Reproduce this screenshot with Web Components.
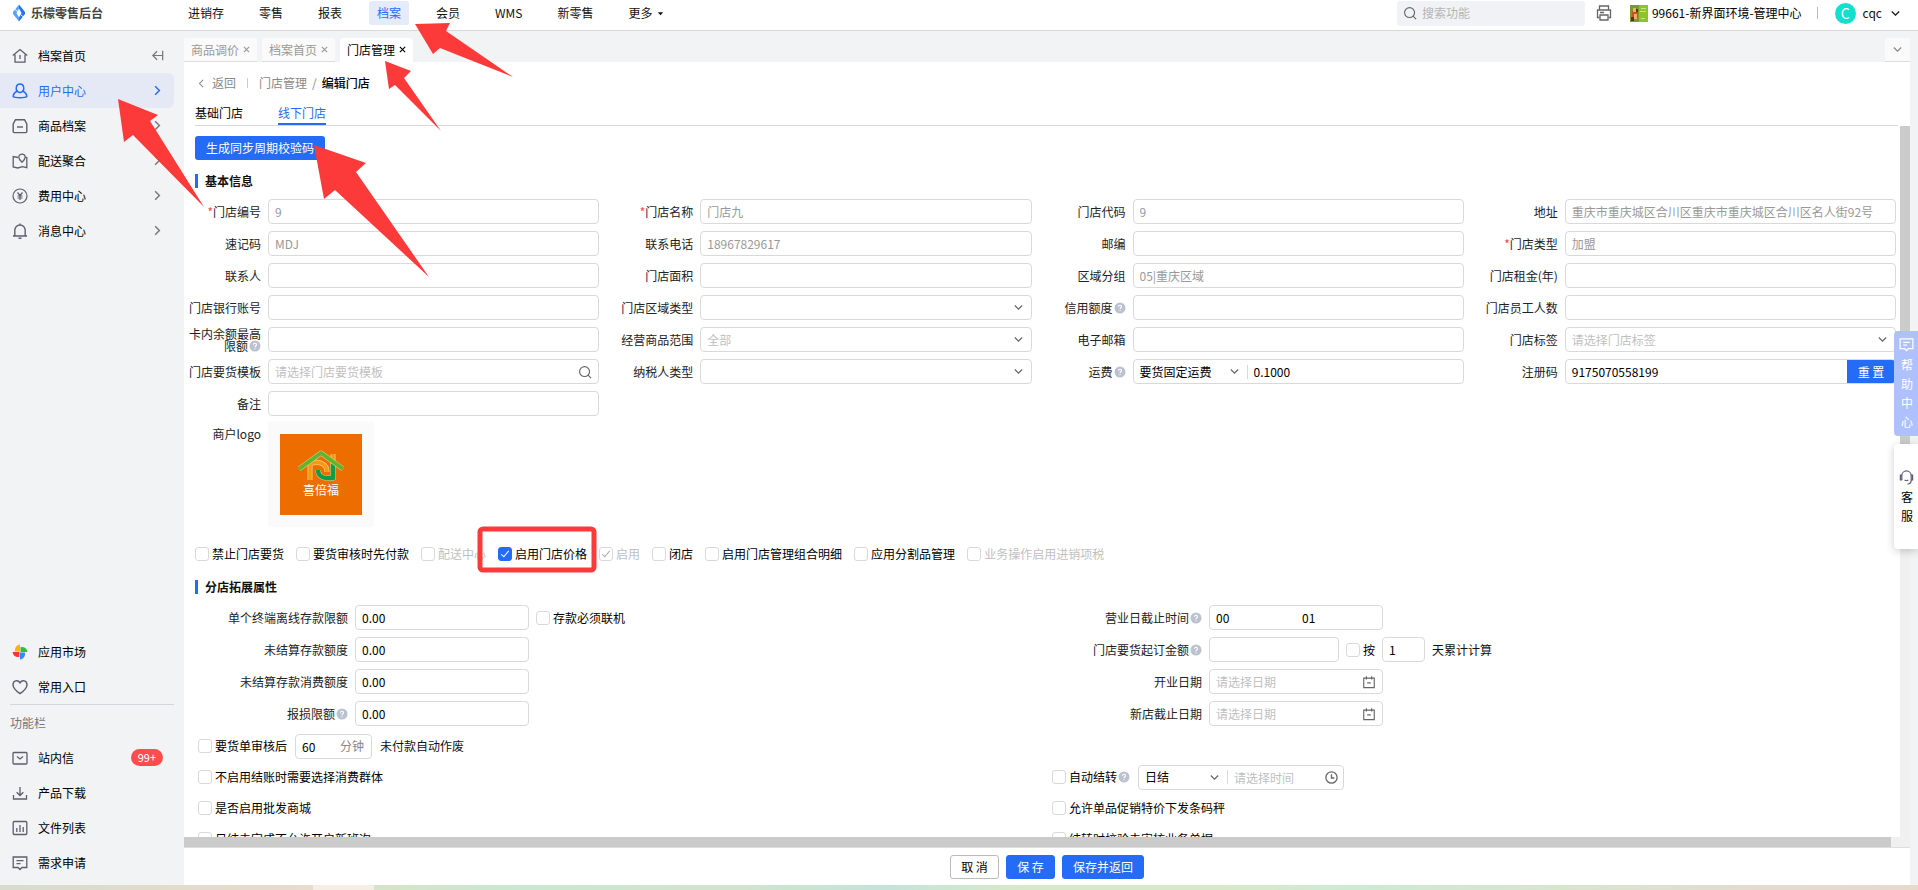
<!DOCTYPE html>
<html lang="zh-CN">
<head>
<meta charset="utf-8">
<title>乐檬零售后台</title>
<style>
  html, body { margin: 0; height: 100%; }
  body {
    font: 12px/16px "Noto Sans CJK SC", "Noto Sans", sans-serif;
    color: #111; background: #f1f3f5; overflow: hidden;
    --blue: #246bf5; --line: #d9d9d9; --muted: #999; --hint: #bfbfbf; --panel: #f1f3f5;
  }
</style>
</head>
<body>
<admin-shell></admin-shell>
<script>
const ICONS = {
  brand: ['0 0 14 18', '<path fill="#5aa4ff" d="M7 .5 1 8v2l6 7.500z"/><path fill="#2a72f0" d="M7 .5 13 8v2l-6 7.500z"/><path fill="#fff" d="M7 4.500 9.500 9 7 13.500 4.500 9z"/><path stroke="#fff" stroke-width=".9" d="m2.500 5 3 2.500M11.500 13l-3-2.500"/>'],
  home: ['0 0 16 16', '<g fill="none" stroke="currentColor" stroke-width="1.300"><path d="M.8 7.500 8 1.500l7.200 6"/><path d="M3 6.500V14.200h10V6.500M8 7v4"/></g>'],
  user: ['0 0 16 16', '<g fill="none" stroke="currentColor" stroke-width="1.500"><path d="M5.300 8.200C3.400 6.200 3.800 1 8 1s4.600 5.200 2.700 7.200"/><path d="M5.300 8.200C2.500 9.400 1.200 11.500 1.200 13.500c2 1.700 11.600 1.700 13.600 0 0-2-1.300-4.100-4.100-5.300-1.500 1.400-3.900 1.400-5.400 0z"/></g>'],
  goods: ['0 0 16 16', '<g fill="none" stroke="currentColor" stroke-width="1.400"><path d="M3.500 1.700h9L14.800 6v7.600a1 1 0 0 1-1 1H2.200a1 1 0 0 1-1-1V6z"/><path d="M5 9h6"/></g>'],
  map: ['0 0 16 16', '<g fill="none" stroke="currentColor" stroke-width="1.300"><path d="M6 4.500 1.200 3.500V14l4.600 1 4.700-1.300 4.300.9V4.500l-1.600-.3"/><path d="M10 9.200C7.500 7 6.800 5.800 6.800 4.300a3.200 3.200 0 0 1 6.400 0c0 1.500-.7 2.700-3.200 4.900z"/></g>'],
  yen: ['0 0 16 16', '<g fill="none" stroke="currentColor" stroke-width="1.200"><circle cx="8" cy="8" r="7"/><path d="m5.500 4.500 2.500 3 2.500-3M8 7.500V12M5.500 8h5M5.500 10h5"/></g>'],
  bell: ['0 0 16 16', '<g fill="none" stroke="currentColor" stroke-width="1.400"><path d="M2.800 13V7.200a5.200 5.200 0 0 1 10.400 0V13M1 13h14M8 2V.5M6.500 15.200h3"/></g>'],
  pinwheel: ['0 0 16 16', '<path fill="#ffb020" d="M8 7.500H3C2.500 3.500 4.500 1 8 .5z"/><path fill="#25c53a" d="M8.500 8V3c4-.5 6.500 1.500 7 5z"/><path fill="#2f8cff" d="M8 8.500h5c.5 4-1.500 6.500-5 7z"/><path fill="#f8352f" d="M7.500 8v5c-4 .5-6.500-1.500-7-5z"/>'],
  heart: ['0 0 16 16', '<path fill="none" stroke="currentColor" stroke-width="1.400" d="M8 14.700C4.500 12.300 1 9.500 1 5.800 1 1.500 6 .3 8 3.800c2-3.500 7-2.300 7 2 0 3.700-3.500 6.500-7 8.900z"/>'],
  mail: ['0 0 16 16', '<g fill="none" stroke="currentColor" stroke-width="1.300"><rect x="1" y="2.500" width="14" height="11.500" rx="1"/><path d="m5 6.500 3 2.500 3-2.500"/></g>'],
  download: ['0 0 16 16', '<path fill="none" stroke="currentColor" stroke-width="1.300" d="M8 2v8M4.700 7.200 8 10.500l3.300-3.300M1.500 10v4h13v-4"/>'],
  chart: ['0 0 16 16', '<g fill="none" stroke="currentColor" stroke-width="1.300"><rect x="1.200" y="1.500" width="13.600" height="13" rx="1"/><path d="M4.800 12V8M8 12V5M11.200 12V7"/></g>'],
  note: ['0 0 16 16', '<path fill="none" stroke="currentColor" stroke-width="1.300" d="M1.200 2h13.600v10.500H10l-2 2-2-2H1.200zM4.500 5.700h7M4.500 8.700h4"/>'],
  right: ['0 0 16 16', '<path fill="none" stroke="currentColor" stroke-width="1.600" d="m5.500 3.500 4.500 4.500-4.500 4.500"/>'],
  left: ['0 0 16 16', '<path fill="none" stroke="currentColor" stroke-width="1.300" d="M10 3.500 5.500 8l4.500 4.500"/>'],
  down: ['0 0 16 16', '<path fill="none" stroke="currentColor" stroke-width="1.500" d="M3.500 5.500 8 10l4.500-4.500"/>'],
  fold: ['0 0 16 16', '<path fill="none" stroke="currentColor" stroke-width="1.300" d="M13.500 3v10M13 8H3M7.500 3.500 3 8l4.500 4.500"/>'],
  search: ['0 0 16 16', '<g fill="none" stroke="currentColor" stroke-width="1.300"><circle cx="7.500" cy="7.500" r="5.700"/><path d="m11.500 11.500 3.500 3.500"/></g>'],
  printer: ['0 0 16 16', '<g fill="none" stroke="currentColor" stroke-width="1.300"><path d="M3.500 5V1h9v4M3.500 12.500h-2V5h13v7.500h-2"/><path d="M4 10h8v5H4zM4 7.500h4"/></g>'],
  close: ['0 0 8 8', '<path fill="none" stroke="currentColor" stroke-width="1.300" d="m1 1 6 6M7 1 1 7"/>'],
  caret: ['0 0 8 8', '<path fill="currentColor" d="M1 2.500h6L4 6z"/>'],
  help: ['0 0 12 12', '<circle cx="6" cy="6" r="5.500" fill="#bcc1d0"/><path fill="none" stroke="#fff" stroke-width="1.100" d="M4.400 4.700c.2-2 3.200-1.800 3.100 0C7.500 5.700 6 5.800 6 7.200M6 8.300v1"/>'],
  calendar: ['0 0 16 16', '<path fill="none" stroke="currentColor" stroke-width="1.300" d="M2 3.500h12v11H2zM5 1.500V5M11 1.500V5M6 9h4"/>'],
  clock: ['0 0 16 16', '<g fill="none" stroke="currentColor" stroke-width="1.400"><circle cx="8" cy="8" r="6"/><path d="M8 4.500V8.500h3"/></g>'],
  headset: ['0 0 16 18', '<g fill="none" stroke="currentColor" stroke-width="1.300"><path d="M3 12V7a5 5 0 0 1 10 0v5c0 3-1.500 4-4 4M3 6.500H1.500v5H3M13 6.500h1.500v5H13M6 11.500c1 1 3 1 4 0"/></g>'],
  poster: ['0 0 18 17', '<path fill="#7a9a2a" d="M0 0h18v17H0z"/><path fill="#8fc32e" d="M9 0h9v17H9z"/><path fill="#c94f24" d="M2 6h6v7H2z"/><path fill="#e9b15a" d="M3 3h3v4H3zM4 9h3v5H4z"/><path fill="#5b3318" d="M1 12h3v4H1zM6 4h2v3H6z"/><path fill="#c7e58c" d="M11 3h5v1h-5zM10 6h6v1h-6zM11 13h4v1h-4z"/>'],
  house: ['0 0 46 31', '<g fill="none" stroke-linejoin="round"><path stroke="#f6c78a" stroke-width="5" d="M12 30V14c9-4 17 0 17 8M35 4v14"/><path stroke="#f39c12" stroke-width="3.500" d="M12 30V14c9-4 17 0 17 8M35 4v14"/><path stroke="#e8c98a" stroke-width="5.500" d="M35 14v14h-6c-5 0-9-3-9-8"/><path stroke="#0a9f48" stroke-width="4.500" d="M35 14v14h-6c-5 0-9-3-9-8"/><path stroke="#d8d08a" stroke-width="5" d="M1 19 23 3l22 16"/><path stroke="#62b32e" stroke-width="4" d="M1 19 23 3l22 16"/></g>']
};
const svg = (name, w = 16, h = w) => `<svg part="icon" width="${w}" height="${h}" viewBox="${ICONS[name][0]}" aria-hidden="true">${ICONS[name][1]}</svg>`;
const BASE = '*{box-sizing:border-box}svg{flex:none;display:block}a{color:inherit;text-decoration:none}button,input,select{font:inherit;color:inherit;margin:0}';

class Part extends HTMLElement {
  connectedCallback() {
    if (this.shadowRoot) return;
    this.attachShadow({ mode: 'open' }).innerHTML = `<style>${BASE}${this.css()}</style>${this.html()}`;
  }
  at(name, fallback = '') { return this.getAttribute(name) ?? fallback; }
  css() { return ''; }
  html() { return '<slot></slot>'; }
}
const define = (tag, cls) => customElements.define(tag, cls);

define('top-bar', class extends Part {
  css() { return `
    :host{display:flex;align-items:center;height:31px;flex:none;background:#fff;border-bottom:1px solid #d8d8d8;padding:0 16px 4px 12px}
    .brand{display:flex;align-items:center;gap:5px;width:168px;font-weight:700;color:#444}
    nav{display:flex;gap:19px;flex:1}
    nav a{display:flex;align-items:center;gap:4px;height:24px;padding:0 8px;border-radius:3px}
    nav a.on{background:#e6ebf9;color:var(--blue)}
    .find{display:flex;align-items:center;gap:5px;width:188px;height:25px;padding:0 6px;border-radius:3px;background:#f1f2f5;color:#666}
    .find input{flex:1;min-width:0;border:0;background:none;outline:0;padding:0}
    input::placeholder{color:#b5b5b5}
    .print{border:0;background:none;padding:0;margin:0 18px 0 11px;color:#666}
    .env{display:flex;align-items:center;gap:4px;color:#000}
    i{width:1px;height:12px;background:#bbb;margin:0 17px 0 15px}
    .me{display:flex;align-items:center;gap:7px;border:0;background:none;padding:0}
    b{width:21px;height:21px;border-radius:50%;background:#12dfce;color:#fff;font-weight:400;font-size:14px;line-height:21px}`; }
  html() {
    const items = ['进销存', '零售', '报表', '档案', '会员', 'WMS', '新零售'];
    return `<a class="brand" href="#">${svg('brand', 14, 18)}乐檬零售后台</a>
    <nav>${items.map(t => `<a href="#"${t === '档案' ? ' class="on"' : ''}>${t}</a>`).join('')}<a href="#">更多${svg('caret', 7)}</a></nav>
    <div class="find">${svg('search', 14)}<input type="search" aria-label="搜索功能" placeholder="搜索功能"></div>
    <button class="print" aria-label="打印">${svg('printer')}</button>
    <span class="env">${svg('poster', 18, 17)}99661-新界面环境-管理中心</span><i></i>
    <button class="me"><b>C</b>cqc ${svg('down', 13)}</button>`;
  }
});

define('side-item', class extends Part {
  css() { return `
    :host{display:block;color:#000}
    a{display:flex;align-items:center;height:35px;padding:0 9px 0 12px;margin-right:10px;border-radius:0 6px 6px 0}
    a>svg{color:#5b5f6e}
    span{flex:1;padding-left:10px}
    a>svg:last-child{color:#777}
    :host([active]) a{background:#e5e9f5;color:var(--blue)}
    :host([active]) a>svg{color:var(--blue)}
    b{height:17px;padding:0 7px;border-radius:9px;background:#ff4d4f;color:#fff;font-weight:400;font-size:11px;line-height:17px;margin-right:2px}`; }
  html() {
    const end = this.at('end');
    return `<a href="#">${svg(this.at('icon'), 16)}<span><slot></slot></span>${this.hasAttribute('badge') ? `<b>${this.at('badge')}</b>` : end ? svg(end, 15) : ''}</a>`;
  }
});

define('side-bar', class extends Part {
  css() { return `
    :host{display:flex;flex-direction:column;width:184px;flex:none;background:var(--panel);padding:7px 0 5px}
    .grow{flex:1}
    hr{width:164px;margin:0 10px;border:0;border-top:1px solid #d4d6da}
    h2{margin:0;padding-left:10px;font-size:12px;font-weight:400;line-height:35px;color:#777}`; }
  html() { return `
    <side-item icon="home" end="fold">档案首页</side-item>
    <side-item icon="user" end="right" active>用户中心</side-item>
    <side-item icon="goods" end="right">商品档案</side-item>
    <side-item icon="map" end="right">配送聚合</side-item>
    <side-item icon="yen" end="right">费用中心</side-item>
    <side-item icon="bell" end="right">消息中心</side-item>
    <div class="grow"></div>
    <side-item icon="pinwheel">应用市场</side-item>
    <side-item icon="heart">常用入口</side-item>
    <hr><h2>功能栏</h2>
    <side-item icon="mail" badge="99+">站内信</side-item>
    <side-item icon="download">产品下载</side-item>
    <side-item icon="chart">文件列表</side-item>
    <side-item icon="note">需求申请</side-item>`; }
});

define('page-tabs', class extends Part {
  css() { return `
    :host{display:flex;gap:5px;height:31px;flex:none;padding-top:7px;margin-right:8px}
    a{display:flex;align-items:center;gap:4px;padding:0 7px;border-radius:3px 3px 0 0;background:#fafafa;color:#999;border-bottom:1px solid #ddd}
    a.on{background:#fff;color:#000;border-color:#fff}
    button{margin-left:auto;width:25px;border:0;border-bottom:1px solid #ddd;border-radius:3px 3px 0 0;background:#fafafa;color:#888;padding:0 6px}`; }
  html() { return `<a href="#">商品调价${svg('close', 7)}</a><a href="#">档案首页${svg('close', 7)}</a><a class="on" href="#">门店管理${svg('close', 7)}</a><button aria-label="更多标签">${svg('down', 13)}</button>`; }
});

define('crumb-bar', class extends Part {
  css() { return `
    :host{display:block;flex:none;padding:0 12px 0 11px}
    .path{display:flex;align-items:center;height:42px;color:#888}
    .path a:first-child{display:flex;align-items:center;gap:4px}
    i{width:1px;height:10px;background:#ccc;margin:0 11px}
    .path span{margin:0 5px}
    strong{font-weight:500;color:#000}
    nav{display:flex;gap:35px;border-bottom:1px solid #d9d9d9;color:#000}
    nav a{height:21px;line-height:18px}
    nav a.on{color:var(--blue);border-bottom:2px solid var(--blue)}`; }
  html() { return `<div class="path"><a href="#">${svg('left', 13)}返回</a><i></i><a href="#">门店管理</a><span>/</span><strong>编辑门店</strong></div>
    <nav><a href="#">基础门店</a><a class="on" href="#">线下门店</a></nav>`; }
});

define('section-title', class extends Part {
  css() { return `:host{display:block;margin:14px 0 11px 7px}
    h3{margin:0;border-left:3px solid var(--blue);padding-left:7px;height:14px;font-size:12px;line-height:14px;font-weight:700;color:#111}`; }
  html() { return '<h3><slot></slot></h3>'; }
});

const BOX = `
  .box{display:flex;align-items:center;flex:1;min-width:0;height:25px;border:1px solid var(--line);border-radius:4px;background:#fff;overflow:hidden;color:#000}
  .box input,.box select{flex:1;min-width:0;width:100%;height:23px;border:0;outline:0;padding:0 6px;background:none;appearance:none;opacity:1}
  .box input:disabled{color:var(--muted)}
  input::placeholder,.box select.empty{color:var(--hint)}
  .box svg{margin-right:6px;color:#666}
  i{width:1px;height:14px;background:var(--line);flex:none}`;

define('form-field', class extends Part {
  css() { return `
    :host{display:flex;align-items:center;gap:7px;height:25px;min-width:0}
    label{display:flex;flex-wrap:wrap;justify-content:flex-end;align-items:center;width:var(--label,73px);flex:none;line-height:12px;text-align:right;color:#222}
    em{font-style:normal;color:#f5454a}
    label svg{margin-left:1px}
    ${BOX}
    :host([wide]) .box{flex:none;width:174px}
    .box.part{flex:none;width:130px}
    .box.tiny{flex:none;width:43px}
    .box select.freight{flex:none;width:94px}
    .reset{align-self:stretch;border:0;background:var(--blue);color:#fff;width:48px;flex:none;padding:0}
    .pair input{width:87px}`; }
  html() {
    const [kind, value, hint] = [this.at('kind', 'text'), this.at('value'), this.at('hint')];
    const off = this.hasAttribute('off') ? ' disabled' : '';
    const input = `<input id="f" value="${value}" placeholder="${hint}"${off}>`;
    const body = {
      text: `<div class="box">${input}</div>`,
      search: `<div class="box">${input}${svg('search', 14)}</div>`,
      date: `<div class="box">${input}${svg('calendar', 14)}</div>`,
      select: `<div class="box"><select id="f" class="empty"><option>${hint}</option></select>${svg('down', 13)}</div>`,
      freight: `<div class="box"><select id="f" class="freight"><option>要货固定运费</option></select>${svg('down', 13)}<i></i><input aria-label="运费金额" value="0.1000"></div>`,
      reset: `<div class="box">${input}<button class="reset">重 置</button></div>`,
      pair: `<div class="box pair"><input id="f" value="00"><input aria-label="截止分钟" value="01"></div>`,
      order: `<div class="box part"><input id="f"></div><check-box>按</check-box><div class="box tiny"><input aria-label="天数" value="1"></div><span>天累计计算</span>`
    }[kind];
    const words = this.at('label').split('|');
    const mark = this.hasAttribute('required') ? '<em>*</em>' : '';
    return `<label for="f">${mark}${words.map(w => `<span>${w}</span>`).join('')}${this.hasAttribute('help') ? svg('help', 12) : ''}</label>${body}<slot></slot>`;
  }
});

define('check-box', class extends Part {
  css() { return `
    :host{display:block;flex:none}
    label{display:flex;align-items:center;gap:3px;color:#000}
    :host([off]) label{color:var(--hint)}
    input{appearance:none;width:14px;height:14px;flex:none;border:1px solid var(--line);border-radius:3px;background:#fff;display:grid;place-items:center}
    input:checked::after{content:"";width:3px;height:7px;margin-bottom:2px;border:solid #fff;border-width:0 1px 1px 0;box-sizing:content-box;rotate:40deg}
    input:checked{background:var(--blue);border-color:var(--blue)}
    input:disabled:checked{background:#fff;border-color:var(--line)}
    input:disabled:checked::after{border-color:#aaa}`; }
  html() { return `<label><input type="checkbox"${this.hasAttribute('on') ? ' checked' : ''}${this.hasAttribute('off') ? ' disabled' : ''}><span><slot></slot></span></label>`; }
});

define('merchant-logo', class extends Part {
  css() { return `
    :host{display:flex;gap:7px;margin-top:5px}
    span{width:73px;text-align:right;line-height:25px;color:#222}
    .pad{width:106px;height:106px;padding:13px 12px;background:#fafafa;border-radius:3px}
    figure{margin:0;height:81px;background:#ed6d00;color:#fff;display:flex;flex-direction:column;align-items:center;padding-top:16px;gap:2px}
    figcaption{line-height:14px}`; }
  html() { return `<span>商户logo</span><div class="pad"><figure>${svg('house', 46, 31)}<figcaption>喜倍福</figcaption></figure></div>`; }
});

define('unit-input', class extends Part {
  css() { return `:host{display:block;width:77px;margin:0 8px}${BOX}.box span{color:#888;padding-right:7px;flex:none}`; }
  html() { return `<div class="box"><input aria-label="分钟数" value="60"><span>分钟</span></div>`; }
});

define('settle-picker', class extends Part {
  css() { return `:host{display:flex;align-items:center;gap:8px;margin-left:1px}${BOX}.box{width:206px;flex:none}.box select{flex:none;width:69px}.box svg:last-child{margin-right:4px}`; }
  html() { return `${svg('help', 12)}<div class="box"><select aria-label="结转方式"><option>日结</option></select>${svg('down', 13)}<i></i><input aria-label="结转时间" placeholder="请选择时间">${svg('clock', 15)}</div>`; }
});

define('store-form', class extends Part {
  css() { return `
    :host{display:block;flex:1;min-width:0;overflow:hidden;padding:10px 4px 0;background:#fff}
    .sync{display:block;margin-left:7px;height:24px;width:130px;border:0;border-radius:3px;background:var(--blue);color:#fff;padding:0}
    .grid{display:grid;grid-template-columns:repeat(4,minmax(0,1fr));gap:7px 21px}
    .grid form-field:nth-child(25){grid-column:1}
    .checks{display:flex;gap:12px;align-items:center;height:24px;margin:15px 0 0 7px}
    .two{display:grid;grid-template-columns:repeat(2,minmax(0,1fr));gap:7px 0;--label:160px}
    .flags{display:grid;grid-template-columns:repeat(2,minmax(0,1fr));grid-auto-rows:24px;gap:7px 0;margin-top:8px}
    .flags>div{display:flex;align-items:center;padding-left:10px}`; }
  html() { return `
    <button class="sync">生成同步周期校验码</button>
    <section-title>基本信息</section-title>
    <div class="grid">
      <form-field label="门店编号" required value="9" off></form-field>
      <form-field label="门店名称" required value="门店九" off></form-field>
      <form-field label="门店代码" value="9" off></form-field>
      <form-field label="地址" value="重庆市重庆城区合川区重庆市重庆城区合川区名人街92号" off></form-field>
      <form-field label="速记码" value="MDJ" off></form-field>
      <form-field label="联系电话" value="18967829617" off></form-field>
      <form-field label="邮编"></form-field>
      <form-field label="门店类型" required value="加盟" off></form-field>
      <form-field label="联系人"></form-field>
      <form-field label="门店面积"></form-field>
      <form-field label="区域分组" value="05|重庆区域" off></form-field>
      <form-field label="门店租金(年)"></form-field>
      <form-field label="门店银行账号"></form-field>
      <form-field label="门店区域类型" kind="select"></form-field>
      <form-field label="信用额度" help></form-field>
      <form-field label="门店员工人数"></form-field>
      <form-field label="卡内余额最高|限额" help></form-field>
      <form-field label="经营商品范围" kind="select" hint="全部"></form-field>
      <form-field label="电子邮箱"></form-field>
      <form-field label="门店标签" kind="select" hint="请选择门店标签"></form-field>
      <form-field label="门店要货模板" kind="search" hint="请选择门店要货模板"></form-field>
      <form-field label="纳税人类型" kind="select"></form-field>
      <form-field label="运费" kind="freight" help></form-field>
      <form-field label="注册码" kind="reset" value="9175070558199"></form-field>
      <form-field label="备注"></form-field>
    </div>
    <merchant-logo></merchant-logo>
    <div class="checks">
      <check-box>禁止门店要货</check-box><check-box>要货审核时先付款</check-box><check-box off>配送中心</check-box>
      <check-box on>启用门店价格</check-box><check-box on off>启用</check-box><check-box>闭店</check-box>
      <check-box>启用门店管理组合明细</check-box><check-box>应用分割品管理</check-box><check-box off>业务操作启用进销项税</check-box>
    </div>
    <section-title>分店拓展属性</section-title>
    <div class="two">
      <form-field wide label="单个终端离线存款限额" value="0.00"><check-box>存款必须联机</check-box></form-field>
      <form-field wide label="营业日截止时间" kind="pair" help></form-field>
      <form-field wide label="未结算存款额度" value="0.00"></form-field>
      <form-field label="门店要货起订金额" kind="order" help></form-field>
      <form-field wide label="未结算存款消费额度" value="0.00"></form-field>
      <form-field wide label="开业日期" kind="date" hint="请选择日期"></form-field>
      <form-field wide label="报损限额" value="0.00" help></form-field>
      <form-field wide label="新店截止日期" kind="date" hint="请选择日期"></form-field>
    </div>
    <div class="flags">
      <div><check-box>要货单审核后</check-box><unit-input></unit-input><span>未付款自动作废</span></div><div></div>
      <div><check-box>不启用结账时需要选择消费群体</check-box></div>
      <div><check-box>自动结转</check-box><settle-picker></settle-picker></div>
      <div><check-box>是否启用批发商城</check-box></div>
      <div><check-box>允许单品促销特价下发条码秤</check-box></div>
      <div><check-box>日结未完成不允许开启新班次</check-box></div>
      <div><check-box>结转时校验未审核业务单据</check-box></div>
    </div>`; }
});

define('form-footer', class extends Part {
  css() { return `
    :host{display:flex;justify-content:center;align-items:center;gap:7px;flex:none;height:38px;border-top:1px solid #ddd;background:#fff}
    button{height:24px;min-width:49px;padding:0 10px;border:1px solid var(--blue);border-radius:3px;background:var(--blue);color:#fff;line-height:20px}
    .plain{background:#fff;border-color:#bbb;color:#000}`; }
  html() { return '<button class="plain">取 消</button><button>保 存</button><button>保存并返回</button>'; }
});

define('side-float', class extends Part {
  css() { return `
    :host{display:block;position:absolute;right:0;top:331px;width:24px}
    a{display:flex;flex-direction:column;align-items:center;justify-content:center;height:105px;border-radius:4px 0 0 4px;line-height:19px;text-align:center}
    .help{background:#afc1fd;color:#fff}
    .chat{margin-top:8px;background:#fff;color:#000;box-shadow:0 2px 8px #0003}
    .chat svg{margin-bottom:1px;color:#5b5f6e}
    .help svg{margin-bottom:3px}
    span{width:12px;margin-left:2px}`; }
  html() { return `<a class="help" href="#">${svg('note', 15)}<span>帮助中心</span></a><a class="chat" href="#">${svg('headset', 15, 17)}<span>客服</span></a>`; }
});

define('mark-up', class extends Part {
  css() { return ':host{display:block;position:absolute;left:0;top:0;pointer-events:none}'; }
  html() { return `<svg width="720" height="600" viewBox="0 0 720 600" fill="#fc3a3a" aria-hidden="true">
    <path d="M415 24 450 23 446 31 513 77 440 48 433 54z"/>
    <path d="M385 61 411 71 404 78 441 131 395 85 389 89z"/>
    <path d="M118 99 158 115 150 121 204 207 133 135 124 142z"/>
    <path d="M314 145 366 163 356 172 429 277 335 190 324 199z"/>
    <rect x="480" y="529" width="114" height="41" rx="3" fill="none" stroke="#fc3a3a" stroke-width="5"/></svg>`; }
});

define('admin-shell', class extends Part {
  css() { return `
    :host{display:flex;flex-direction:column;height:100vh;position:relative}
    .body{display:flex;flex:1;min-height:0}
    main{display:flex;flex-direction:column;flex:1;min-width:0}
    .sheet{display:flex;flex-direction:column;flex:1;min-height:0;margin-right:8px;background:#fff}
    .view{display:flex;flex:1;min-height:0}
    .vbar{width:10px;flex:none;background:#f0f0f0}
    .vbar div{height:55%;background:#cbcbcb}
    .hbar{height:10px;flex:none;background:#f0f0f0;padding-right:19px}
    .hbar div{height:100%;background:#cbcbcb}
    .strip{height:5px;flex:none;background:linear-gradient(90deg,#d8dccd 0,#e8dccb 16%,#e8dccb 16.3%,#f4efe4 16.3%,#f4efe4 19.5%,#d5e5c8 19.5%,#c9e8cf 27%,#d0e5cb 38%,#c3e3d9 46%,#d6eac9 53%,#d6eac9 64%,#cdebd2 71%,#d8e5cd 82%,#e3dccd 92%,#e5dacb 100%)}`; }
  html() { return `<top-bar></top-bar>
    <div class="body"><side-bar></side-bar><main><page-tabs></page-tabs>
      <div class="sheet"><crumb-bar></crumb-bar>
        <div class="view"><store-form></store-form><div class="vbar"><div></div></div></div>
        <div class="hbar"><div></div></div><form-footer></form-footer></div></main></div>
    <div class="strip"></div><side-float></side-float><mark-up></mark-up>`; }
});
</script>
</body>
</html>
